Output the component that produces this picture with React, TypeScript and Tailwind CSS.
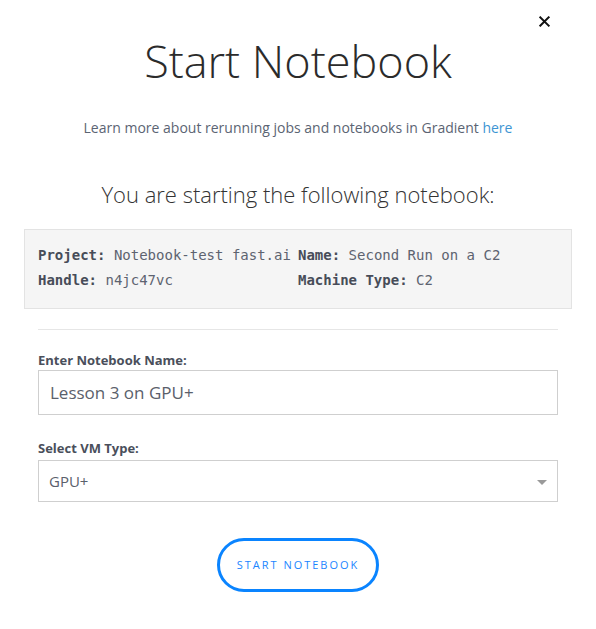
import React from 'react';

const MONO = "font-['DejaVu_Sans_Mono',monospace]";

const InfoItem = ({ label, value }: { label: string; value: string }) => (
  <div className="whitespace-nowrap">
    <span className="font-bold text-[#474c58]">{label}</span>
    <span className="text-[#5d6370]"> {value}</span>
  </div>
);

export default function App() {
  return (
    <div className="relative w-[596px] h-[629px] bg-white font-['Open_Sans',sans-serif] text-[#333]">
      {/* Close */}
      <button className="absolute top-[14px] right-[45px] w-[14px] h-[14px] flex items-center justify-center">
        <svg viewBox="0 0 12 12" className="w-[11px] h-[11px]">
          <path d="M1.5 1.5l9 9M10.5 1.5l-9 9" stroke="#111" strokeWidth="2.2" strokeLinecap="square" />
        </svg>
      </button>

      <div className="flex flex-col items-center pt-[31px]">
        <h1 className="text-[45px] font-light leading-[60px] text-[#2b2b2b]">Start Notebook</h1>

        <p className="mt-[27px] text-[14px] leading-[20px] text-[#5b6473]">
          Learn more about rerunning jobs and notebooks in Gradient{' '}
          <a href="#" className="text-[#3d95d3]">here</a>
        </p>

        <h2 className="mt-[41px] text-[22px] font-light leading-[30px] text-[#333]">
          You are starting the following notebook:
        </h2>
      </div>

      {/* Summary box */}
      <div className={`mx-[24px] mt-[20px] h-[80px] bg-[#f5f5f5] border border-[#e3e3e3] px-[13px] pt-[13px] text-[14px] leading-[25px] ${MONO}`}>
        <div className="grid grid-cols-2">
          <InfoItem label="Project:" value="Notebook-test fast.ai" />
          <InfoItem label="Name:" value="Second Run on a C2" />
          <InfoItem label="Handle:" value="n4jc47vc" />
          <InfoItem label="Machine Type:" value="C2" />
        </div>
      </div>

      <div className="mx-[38px]">
        <hr className="mt-[20px] border-t border-[#e6e6e6]" />

        <label className="block mt-[21px] text-[13px] font-bold leading-[18px] text-[#4a4f5b]">Enter Notebook Name:</label>
        <input
          defaultValue="Lesson 3 on GPU+"
          className="mt-[1px] w-full h-[45px] border border-[#cfcfcf] px-[11px] text-[17px] text-[#5a606b] font-['Open_Sans',sans-serif] outline-none"
        />

        <label className="block mt-[24px] text-[13px] font-bold leading-[18px] text-[#4a4f5b]">Select VM Type:</label>
        <div className="relative mt-[3px] h-[42px] border border-[#cfcfcf] flex items-center px-[10px] text-[15px] text-[#5a606b]">
          <span>GPU+</span>
          <svg viewBox="0 0 10 5" className="absolute right-[10px] top-[19px] w-[10px] h-[5px]">
            <path d="M0 0h10L5 5z" fill="#9a9a9a" />
          </svg>
        </div>
      </div>

      <div className="flex justify-center mt-[36px]">
        <button className="w-[162px] h-[54px] rounded-full border-[3px] border-[#0a84ff] text-[11px] tracking-[0.18em] text-[#1a85ff] font-['Open_Sans',sans-serif]">
          START NOTEBOOK
        </button>
      </div>
    </div>
  );
}
